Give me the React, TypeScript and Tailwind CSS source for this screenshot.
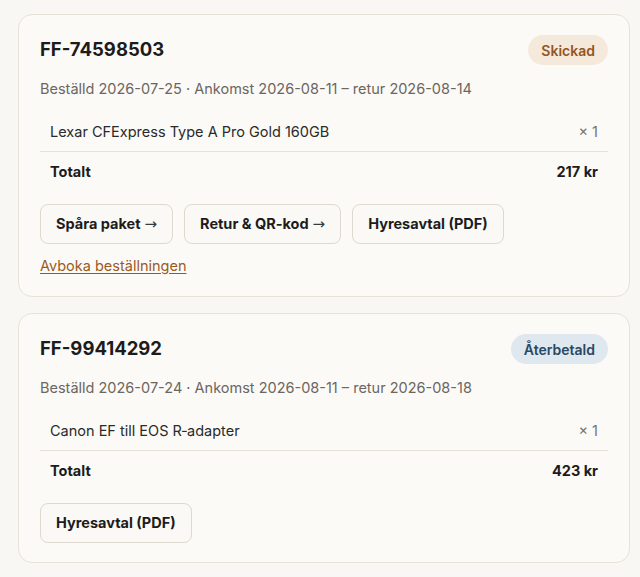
type Order = {
  id: string;
  status: string;
  tone: 'shipped' | 'refunded';
  ordered: string;
  arrival: string;
  ret: string;
  item: string;
  qty: number;
  total: string;
  actions: { label: string; arrow: boolean }[];
  cancellable: boolean;
};

const orders: Order[] = [
  {
    id: 'FF-74598503',
    status: 'Skickad',
    tone: 'shipped',
    ordered: '2026-07-25',
    arrival: '2026-08-11',
    ret: '2026-08-14',
    item: 'Lexar CFExpress Type A Pro Gold 160GB',
    qty: 1,
    total: '217 kr',
    actions: [
      { label: 'Spåra paket', arrow: true },
      { label: 'Retur & QR-kod', arrow: true },
      { label: 'Hyresavtal (PDF)', arrow: false },
    ],
    cancellable: true,
  },
  {
    id: 'FF-99414292',
    status: 'Återbetald',
    tone: 'refunded',
    ordered: '2026-07-24',
    arrival: '2026-08-11',
    ret: '2026-08-18',
    item: 'Canon EF till EOS R‑adapter',
    qty: 1,
    total: '423 kr',
    actions: [{ label: 'Hyresavtal (PDF)', arrow: false }],
    cancellable: false,
  },
];

const OrderCard = ({ order }: { order: Order }) => {
  const badge =
    order.tone === 'shipped'
      ? 'bg-[#f5e9dc] text-[#94561c]'
      : 'bg-[#dfe7ef] text-[#2a4862]';

  return (
    <div className="rounded-[14px] border border-[#e6e2d8] bg-[#fbfaf7] px-[21px] pt-[20px] pb-[19px]">
      <div className="flex items-center justify-between h-[30px]">
        <h2 className="text-[18.5px] font-bold text-[#1c1c1c]">{order.id}</h2>
        <span className={`rounded-full px-[13px] h-[30px] flex items-center text-[14px] font-semibold ${badge}`}>
          {order.status}
        </span>
      </div>
      <p className="mt-[13px] text-[14.5px] leading-[22px] text-[#6b665f]">
        Beställd {order.ordered} · Ankomst {order.arrival} – retur {order.ret}
      </p>
      <div className="mt-[11px] flex justify-between items-center px-[10px] pt-[10px] pb-[8px] border-b border-[#e6e2d8] text-[14.5px] leading-[22px]">
        <span className="text-[#2a2a2a]">{order.item}</span>
        <span className="text-[#77726b]">× {order.qty}</span>
      </div>
      <div className="flex justify-between items-center px-[10px] pt-[9px] pb-[7px] text-[14.5px] leading-[22px] font-bold text-[#1c1c1c]">
        <span>Totalt</span>
        <span>{order.total}</span>
      </div>
      <div className="mt-[14px] flex gap-[11px]">
        {order.actions.map((a) => (
          <button
            key={a.label}
            className="h-[40px] px-[15px] rounded-[8px] border border-[#ddd9cf] bg-[#faf9f6] text-[14.5px] font-bold text-[#1c1c1c] flex items-center"
          >
            {a.label}
            {a.arrow && (
              <span className="ml-[4px] font-normal text-[15px] text-[#3a3a3a] font-['DejaVu_Sans',sans-serif]">→</span>
            )}
          </button>
        ))}
      </div>
      {order.cancellable && (
        <a href="#" className="mt-[11px] inline-block text-[14.5px] leading-[22px] text-[#9a5b1f] underline underline-offset-2">
          Avboka beställningen
        </a>
      )}
    </div>
  );
};

export default function App() {
  return (
    <div className="min-h-screen bg-[#f8f7f3] pl-[18px] pr-[10px] pt-[14px] pb-[14px] font-['Inter',sans-serif]">
      <div className="flex flex-col gap-[16px]">
        {orders.map((o) => (
          <OrderCard key={o.id} order={o} />
        ))}
      </div>
    </div>
  );
}
